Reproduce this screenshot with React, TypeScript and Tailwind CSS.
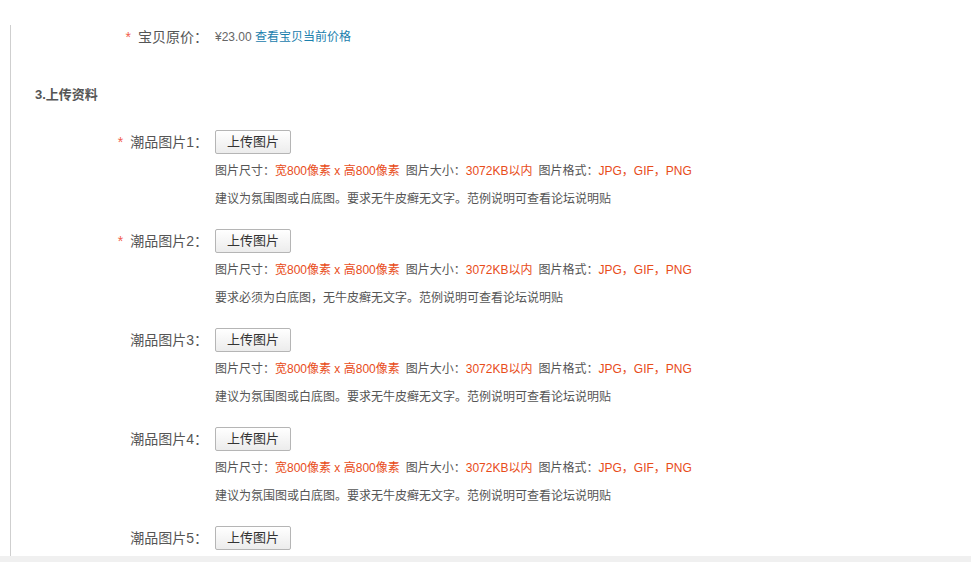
const font = { fontFamily: '"Liberation Sans", "Noto Sans CJK SC", sans-serif' };

type Item = { n: number; required: boolean; note?: string };

const noteA = "建议为氛围图或白底图。要求无牛皮癣无文字。范例说明可查看论坛说明贴";
const noteB = "要求必须为白底图，无牛皮癣无文字。范例说明可查看论坛说明贴";

const items: Item[] = [
  { n: 1, required: true, note: noteA },
  { n: 2, required: true, note: noteB },
  { n: 3, required: false, note: noteA },
  { n: 4, required: false, note: noteA },
  { n: 5, required: false },
];

function Label({ text, required }: { text: string; required?: boolean }) {
  return (
    <div className="w-[197px] shrink-0 text-right text-[14px] text-[#555]">
      {required && <span className="mr-[7px] text-[#f25d4e]">*</span>}
      {text}
    </div>
  );
}

function UploadRow({ item }: { item: Item }) {
  return (
    <div className="mb-[16px]">
      <div className="flex h-[24px] items-center">
        <Label text={`潮品图片${item.n}：`} required={item.required} />
        <button className="ml-[7px] h-[24px] w-[76px] rounded-[2px] border border-[#b5b5b5] bg-gradient-to-b from-white to-[#ececec] text-[13px] text-[#333]">
          上传图片
        </button>
      </div>
      {item.note && (
        <div className="ml-[204px] mt-[3px] text-[12px] leading-[28px] text-[#555]">
          <div>
            图片尺寸：<span className="text-[#e84c1a]">宽800像素 x 高800像素</span>
            <span className="ml-[6px]">图片大小：</span>
            <span className="text-[#e84c1a]">3072KB以内</span>
            <span className="ml-[6px]">图片格式：</span>
            <span className="text-[#e84c1a]">JPG，GIF，PNG</span>
          </div>
          <div>{item.note}</div>
        </div>
      )}
    </div>
  );
}

export default function App() {
  return (
    <div className="flex h-[562px] w-[971px] flex-col overflow-hidden bg-white" style={font}>
      <div className="min-h-0 flex-1 overflow-hidden pl-[10px]">
        <div className="h-full border-l border-[#cfcfcf]">
          <div className="mt-[25px] flex h-[24px] items-center">
            <Label text="宝贝原价：" required />
            <div className="ml-[7px] text-[12px] text-[#666]">
              ¥23.00 <a className="text-[#1a80ad]" href="#">查看宝贝当前价格</a>
            </div>
          </div>
          <div className="ml-[24px] mt-[36px] text-[13px] font-bold leading-[20px] text-[#555]">
            3.上传资料
          </div>
          <div className="mt-[25px]">
            {items.map((it) => (
              <UploadRow key={it.n} item={it} />
            ))}
          </div>
        </div>
      </div>
      <div className="h-[6px] shrink-0 bg-[#f0f0f0]" />
    </div>
  );
}
